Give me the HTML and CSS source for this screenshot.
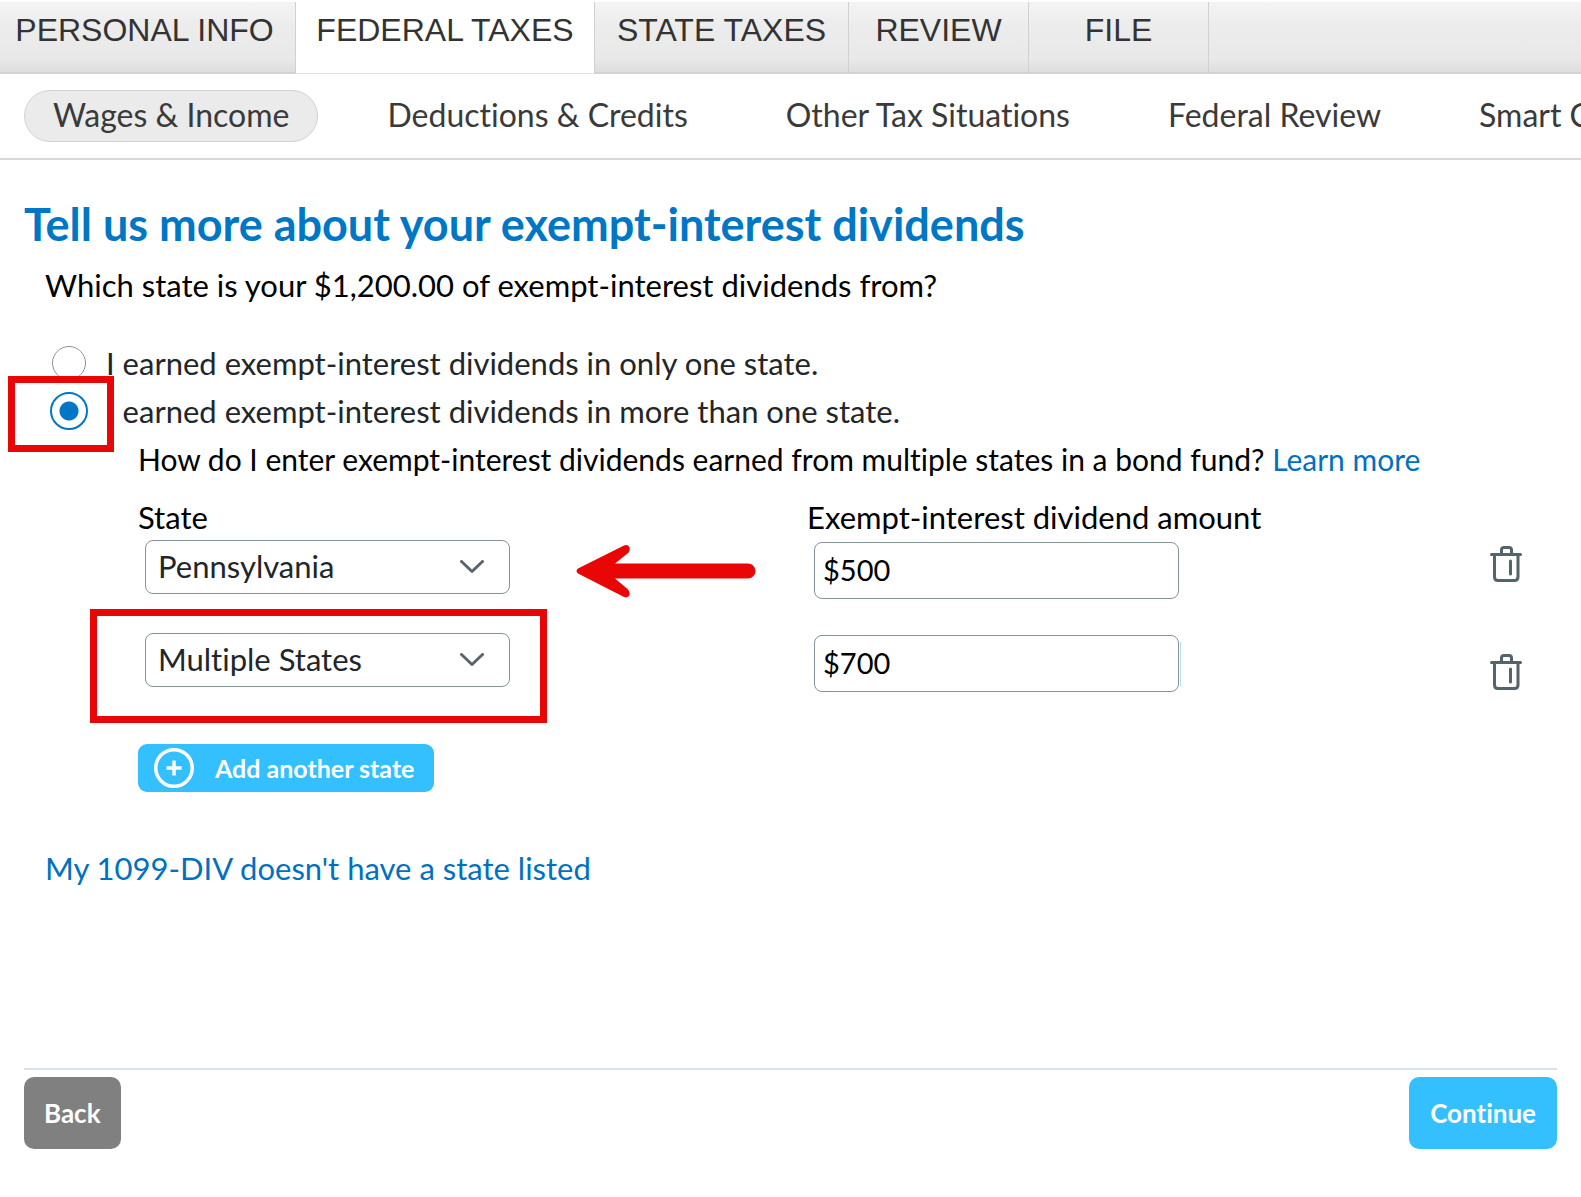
FILE: index.html
```html
<!DOCTYPE html>
<html lang="en">
<head>
<meta charset="utf-8">
<meta name="viewport" content="width=device-width, initial-scale=1">
<title>Exempt-interest dividends</title>
<link rel="stylesheet" href="styles.css">
</head>
<body>
<nav class="tabs" aria-label="Sections">
  <a class="tab tab-first" href="#">PERSONAL INFO</a>
  <a class="tab tab-active" href="#">FEDERAL TAXES</a>
  <a class="tab" href="#">STATE TAXES</a>
  <a class="tab tab-small" href="#">REVIEW</a>
  <a class="tab tab-small" href="#">FILE</a>
</nav>
<nav class="subnav" aria-label="Federal taxes">
  <a class="sub sub-active" href="#">Wages &amp; Income</a>
  <a class="sub" href="#">Deductions &amp; Credits</a>
  <a class="sub" href="#">Other Tax Situations</a>
  <a class="sub" href="#">Federal Review</a>
  <a class="sub" href="#">Smart Check</a>
</nav>
<main class="page">
  <h1 class="title">Tell us more about your exempt-interest dividends</h1>
  <p class="question">Which state is your $1,200.00 of exempt-interest dividends from?</p>
  <div class="choices">
    <div class="choice">
      <span class="radio-slot"><input class="radio" type="radio" name="states" id="one"></span>
      <label for="one">I earned exempt-interest dividends in only one state.</label>
    </div>
    <div class="choice">
      <span class="radio-slot"><input class="radio" type="radio" name="states" id="many" checked></span>
      <label for="many">I earned exempt-interest dividends in more than one state.</label>
      <span class="mark mark-radio"></span>
    </div>
  </div>
  <section class="details">
    <p class="hint">How do I enter exempt-interest dividends earned from multiple states in a bond fund? <a class="link" href="#">Learn more</a></p>
    <div class="row heads">
      <label for="state1">State</label>
      <label for="amount1">Exempt-interest dividend amount</label>
    </div>
    <div class="row">
      <div class="cell">
        <div class="picker">
          <select class="field select" id="state1"><option>Pennsylvania</option></select>
          <svg class="chevron" viewBox="0 0 24 14"><path d="M1.500 1.500 12 11.500 22.500 1.500"/></svg>
        </div>
        <svg class="arrow" viewBox="0 0 180 54"><path d="M2 24.500 48 1.500Q52 0 53.500 3.500 54.500 7 51.500 9.500L39 19.500H172A7.500 7.500 0 0 1 172 34.500H39L51.500 45Q54.500 48 53.500 51 52 54.500 48 53L2 29.500Q-1 27 2 24.500Z"/></svg>
      </div>
      <div class="cell"><input class="field amount" id="amount1" type="text" value="$500"></div>
      <button class="trash" type="button" aria-label="Delete Pennsylvania">
        <svg viewBox="0 0 32 36"><path d="M1.500 8.500H30.500M4.500 9V31Q4.500 34.500 8 34.500H24.500Q28 34.500 28 31V9M11.500 8V4Q11.500 1.500 14 1.500H19Q21.500 1.500 21.500 4V8"/><path d="M20.500 15V28"/></svg>
      </button>
    </div>
    <div class="row">
      <div class="cell">
        <div class="picker">
          <select class="field select" id="state2" aria-label="State"><option>Multiple States</option></select>
          <svg class="chevron" viewBox="0 0 24 14"><path d="M1.500 1.500 12 11.500 22.500 1.500"/></svg>
          <span class="mark mark-select"></span>
        </div>
      </div>
      <div class="cell"><span class="caret-edge"><input class="field amount" id="amount2" type="text" aria-label="Exempt-interest dividend amount" value="$700"></span></div>
      <button class="trash trash-low" type="button" aria-label="Delete Multiple States">
        <svg viewBox="0 0 32 36"><path d="M1.500 8.500H30.500M4.500 9V31Q4.500 34.500 8 34.500H24.500Q28 34.500 28 31V9M11.500 8V4Q11.500 1.500 14 1.500H19Q21.500 1.500 21.500 4V8"/><path d="M20.500 15V28"/></svg>
      </button>
    </div>
    <button class="add" type="button">
      <svg viewBox="0 0 40 40"><circle cx="20" cy="20" r="18.250"/><path d="M20 12.500V27.500M12.500 20H27.500"/></svg>
      Add another state
    </button>
  </section>
  <p class="missing"><a class="link" href="#">My 1099-DIV doesn't have a state listed</a></p>
  <footer class="actions">
    <button class="btn btn-back" type="button">Back</button>
    <button class="btn btn-next" type="button">Continue</button>
  </footer>
</main>
</body>
</html>
```
FILE: styles.css
```css
* { box-sizing: border-box; }

body {
  margin: 0;
  padding-top: 2px;
  background: #fff;
  color: #000;
  font-family: Lato, "Noto Sans", sans-serif;
  font-size: 31px;
  font-variant-ligatures: none;
  line-height: 40px;
  overflow-x: hidden;
}

h1, p { margin: 0; }
button, input, select { font-family: inherit; font-variant-ligatures: inherit; margin: 0; }
a { text-decoration: none; }

.tabs {
  display: flex;
  height: 72px;
  background: linear-gradient(#f4f4f4, #ececec 35%, #e9e9e9 80%, #dedede);
  border-bottom: 2px solid #d2d2d2;
}
.tab {
  flex: none;
  min-width: 254px;
  height: 72px;
  padding: 0 20px;
  border-right: 1px solid #d0d0d0;
  color: #333;
  font-family: "Liberation Sans", Arial, sans-serif;
  font-size: 32px;
  line-height: 56px;
  text-align: center;
  white-space: nowrap;
}
.tab-first { width: 296px; padding: 0 20px 0 14px; }
.tab-active { width: 299px; background: #fff; border-bottom: 1px solid #e2e2e2; }
.tab-small { min-width: 180px; }

.subnav {
  display: flex;
  gap: 40px;
  padding: 16px 24px;
  border-bottom: 2px solid #d8d8d8;
  overflow: hidden;
}
.sub {
  flex: none;
  padding: 0 28px 2px;
  border: 1px solid transparent;
  border-radius: 26px;
  color: #3a3a3a;
  font-size: 32px;
  line-height: 48px;
  white-space: nowrap;
}
.sub-active { background: #ebebeb; border-color: #d2d2d2; }

.page { padding: 36px 24px 40px; }

.title {
  color: #0077c5;
  font-size: 45px;
  line-height: 56px;
  font-weight: 700;
}
.question { margin-top: 13px; padding-left: 21px; }

.choices { margin-top: 34px; padding-left: 24px; }
.choice {
  position: relative;
  display: flex;
  align-items: center;
  height: 48px;
  color: #21262a;
}
.radio-slot {
  display: flex;
  justify-content: center;
  width: 42px;
  margin-right: 16px;
}
.radio {
  appearance: none;
  width: 34px;
  height: 34px;
  border: 1px solid #8d9498;
  border-radius: 50%;
  background: #fff;
}
.radio:checked {
  width: 38px;
  height: 38px;
  border: 2px solid #0077c5;
  background: radial-gradient(circle, #0077c5 9px, #fff 10px);
}

.mark {
  position: absolute;
  border: 7px solid #e90606;
  pointer-events: none;
}
.mark-radio { left: -40px; top: -11px; width: 106px; height: 76px; }
.mark-select { left: -55px; top: -24px; width: 457px; height: 114px; }

.details { padding-left: 114px; margin-top: 4px; }
.hint { font-size: 30px; }
.link { color: #0071c2; }

.row {
  display: grid;
  grid-template-columns: 669fr 683fr 67px;
  align-items: start;
}
.row + .row { min-height: 93px; }
.heads { margin: 18px 0 2px; }
.cell { display: flex; align-items: flex-start; padding-left: 7px; }
.picker { position: relative; width: 365px; margin-top: 1px; }
.field {
  display: block;
  width: 365px;
  border: 1px solid #84939a;
  border-radius: 8px;
  background: #fff;
}
.select {
  appearance: none;
  height: 54px;
  padding: 0 48px 3px 12px;
  color: #21262a;
  font-size: 31px;
}
.amount {
  height: 57px;
  margin-top: 3px;
  padding: 0 8px 2px;
  color: #000;
  font-size: 29px;
}
.chevron {
  position: absolute;
  right: 26px;
  top: 20px;
  width: 24px;
  height: 14px;
  pointer-events: none;
}
.chevron path { fill: none; stroke: #59656b; stroke-width: 3; stroke-linecap: round; stroke-linejoin: round; }
.arrow { width: 180px; height: 54px; margin: 5px 0 0 66px; fill: #e90606; }
.caret-edge { padding-right: 2px; background: linear-gradient(#b9dcf0, #b9dcf0) right 10px / 1px 44px no-repeat; }

.trash {
  width: 32px;
  height: 36px;
  margin-top: 7px;
  padding: 0;
  border: 0;
  background: none;
}
.trash-low { margin-top: 22px; }
.trash svg { display: block; width: 32px; height: 36px; fill: none; stroke: #55636a; stroke-width: 3; stroke-linecap: round; }

.add {
  display: flex;
  align-items: center;
  gap: 21px;
  height: 48px;
  margin-top: 19px;
  padding: 0 20px 0 16px;
  border: 0;
  border-radius: 9px;
  background: #34bfff;
  color: #fff;
  font-size: 25px;
  font-weight: 700;
}
.add svg { width: 40px; height: 40px; fill: none; stroke: #fff; stroke-width: 3.5; }

.missing { margin-top: 56px; padding-left: 21px; }

.actions {
  display: flex;
  justify-content: space-between;
  margin-top: 180px;
  padding-top: 7px;
  border-top: 2px solid #dce3e8;
}
.btn {
  height: 72px;
  padding: 0 20px;
  border: 0;
  border-radius: 10px;
  color: #fff;
  font-size: 26px;
  font-weight: 700;
}
.btn-back { background: #808080; }
.btn-next { padding: 0 21px; background: #34bfff; }
```
